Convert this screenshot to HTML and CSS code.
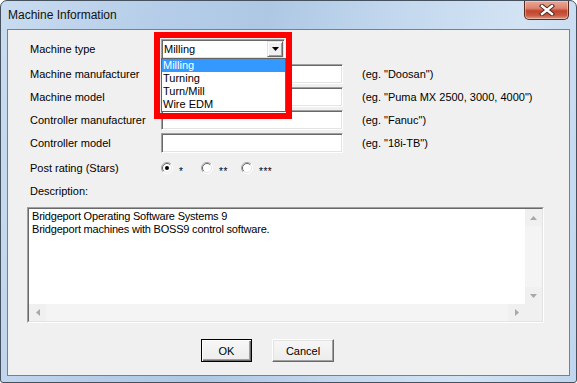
FILE: index.html
```html
<!DOCTYPE html>
<html>
<head>
<meta charset="utf-8">
<title>Machine Information</title>
<link rel="stylesheet" href="styles.css">
</head>
<body>
<div class="window">
  <div class="titlebar">
    <span class="title">Machine Information</span>
    <div class="close">
      <svg width="16" height="12" viewBox="0 0 16 12">
        <path d="M3,2 L13,10 M13,2 L3,10" stroke="#4a2218" stroke-width="4.2" stroke-linecap="square" fill="none"/>
        <path d="M3,2 L13,10 M13,2 L3,10" stroke="#fff" stroke-width="2.4" stroke-linecap="square" fill="none"/>
      </svg>
    </div>
  </div>
  <div class="client">
    <div class="form">
      <div class="row row-first">
        <span class="lbl">Machine type</span>
        <div class="combo">
          <span class="combo-text">Milling</span>
          <span class="combo-btn">
            <svg width="7" height="4" viewBox="0 0 7 4"><polygon points="0,0 7,0 3.5,4" fill="#000"/></svg>
          </span>
        </div>
      </div>
      <div class="row">
        <span class="lbl">Machine manufacturer</span>
        <div class="field"></div>
        <span class="hint">(eg. "Doosan")</span>
      </div>
      <div class="row">
        <span class="lbl">Machine model</span>
        <div class="field"></div>
        <span class="hint">(eg. "Puma MX 2500, 3000, 4000")</span>
      </div>
      <div class="row">
        <span class="lbl">Controller manufacturer</span>
        <div class="field"></div>
        <span class="hint">(eg. "Fanuc")</span>
      </div>
      <div class="row row-gap">
        <span class="lbl">Controller model</span>
        <div class="field"></div>
        <span class="hint">(eg. "18i-TB")</span>
      </div>
      <div class="row">
        <span class="lbl">Post rating (Stars)</span>
        <div class="radios">
          <span class="opt">
            <svg width="12" height="12" viewBox="0 0 12 12">
              <circle cx="6" cy="6" r="5.5" fill="#fff"/>
              <path d="M2.1,9.9 A5.5,5.5 0 0 1 9.9,2.1" fill="none" stroke="#a0a0a0"/>
              <path d="M9.9,2.1 A5.5,5.5 0 0 1 2.1,9.9" fill="none" stroke="#fff"/>
              <path d="M2.8,9.2 A4.5,4.5 0 0 1 9.2,2.8" fill="none" stroke="#696969"/>
              <path d="M9.2,2.8 A4.5,4.5 0 0 1 2.8,9.2" fill="none" stroke="#e3e3e3"/>
              <circle cx="6" cy="6" r="2" fill="#000"/>
            </svg>
            <span class="star">*</span>
          </span>
          <span class="opt">
            <svg width="12" height="12" viewBox="0 0 12 12">
              <circle cx="6" cy="6" r="5.5" fill="#fff"/>
              <path d="M2.1,9.9 A5.5,5.5 0 0 1 9.9,2.1" fill="none" stroke="#a0a0a0"/>
              <path d="M9.9,2.1 A5.5,5.5 0 0 1 2.1,9.9" fill="none" stroke="#fff"/>
              <path d="M2.8,9.2 A4.5,4.5 0 0 1 9.2,2.8" fill="none" stroke="#696969"/>
              <path d="M9.2,2.8 A4.5,4.5 0 0 1 2.8,9.2" fill="none" stroke="#e3e3e3"/>
            </svg>
            <span class="star">**</span>
          </span>
          <span class="opt">
            <svg width="12" height="12" viewBox="0 0 12 12">
              <circle cx="6" cy="6" r="5.5" fill="#fff"/>
              <path d="M2.1,9.9 A5.5,5.5 0 0 1 9.9,2.1" fill="none" stroke="#a0a0a0"/>
              <path d="M9.9,2.1 A5.5,5.5 0 0 1 2.1,9.9" fill="none" stroke="#fff"/>
              <path d="M2.8,9.2 A4.5,4.5 0 0 1 9.2,2.8" fill="none" stroke="#696969"/>
              <path d="M9.2,2.8 A4.5,4.5 0 0 1 2.8,9.2" fill="none" stroke="#e3e3e3"/>
            </svg>
            <span class="star">***</span>
          </span>
        </div>
      </div>
      <div class="row">
        <span class="lbl">Description:</span>
      </div>
    </div>

    <div class="desc">
      <div class="desc-inner">
        <div class="desc-text">Bridgeport Operating Software Systems 9<br>Bridgeport machines with BOSS9 control software.</div>
        <div class="vscroll">
          <span class="sb-btn"><svg width="7" height="4" viewBox="0 0 7 4"><polygon points="3.5,0 7,4 0,4" fill="#a8a8a8"/></svg></span>
          <span class="sb-track"></span>
          <span class="sb-btn"><svg width="7" height="4" viewBox="0 0 7 4"><polygon points="0,0 7,0 3.5,4" fill="#a8a8a8"/></svg></span>
        </div>
        <div class="hscroll">
          <span class="sb-btn"><svg width="4" height="7" viewBox="0 0 4 7"><polygon points="4,0 4,7 0,3.5" fill="#a8a8a8"/></svg></span>
          <span class="sb-track"></span>
          <span class="sb-btn"><svg width="4" height="7" viewBox="0 0 4 7"><polygon points="0,0 4,3.5 0,7" fill="#a8a8a8"/></svg></span>
        </div>
        <div class="corner"></div>
      </div>
    </div>

    <div class="buttons">
      <button class="btn btn-default">OK</button>
      <button class="btn btn-cancel">Cancel</button>
    </div>

    <div class="highlight"></div>
    <ul class="droplist">
      <li class="selected">Milling</li>
      <li>Turning</li>
      <li>Turn/Mill</li>
      <li>Wire EDM</li>
    </ul>
  </div>
</div>
</body>
</html>
```
FILE: styles.css
```css
* {
  box-sizing: border-box;
}

html, body {
  margin: 0;
  padding: 0;
  background: #ffffff;
}

body {
  width: 577px;
  height: 383px;
  overflow: hidden;
  font-family: "Liberation Sans", Arial, sans-serif;
  font-size: 11px;
  color: #000;
}

.window {
  width: 577px;
  height: 383px;
  border: 1px solid #45515e;
  border-radius: 7px 7px 3px 3px;
  background: linear-gradient(100deg, #c9dcf0 0%, #b5cde8 25%, #aec8e4 42%, #c3d8ee 62%, #d3e3f4 82%, #c0d6ee 100%);
  display: flex;
  flex-direction: column;
}

.titlebar {
  height: 28px;
  flex: none;
  display: flex;
  align-items: flex-start;
}

.title {
  font-size: 12px;
  line-height: 14px;
  padding: 7px 0 0 7px;
  color: #111;
}

.close {
  margin-left: auto;
  margin-right: 7px;
  width: 45px;
  height: 19px;
  border: 1px solid #5a2a20;
  border-top: none;
  border-radius: 0 0 5px 5px;
  background: linear-gradient(180deg, #eaa796 0%, #dc8570 40%, #c3432c 55%, #c85a42 80%, #e09a83 100%);
  box-shadow: inset 0 0 0 1px rgba(255, 255, 255, 0.35);
  display: flex;
  align-items: center;
  justify-content: center;
}

.client {
  flex: 1;
  margin: 0 6px 6px;
  border: 1px solid #6f8296;
  background: #f0f0f0;
  position: relative;
}

.form {
  padding: 9px 0 0 22px;
}

.row {
  display: flex;
  align-items: center;
  height: 20px;
  margin-bottom: 3px;
}

.row-first,
.row-gap {
  margin-bottom: 5px;
}

.lbl {
  width: 131px;
  flex: none;
  white-space: nowrap;
}

.field {
  width: 182px;
  height: 20px;
  flex: none;
  background: #fff;
  border: 1px solid;
  border-color: #a0a0a0 #ffffff #ffffff #a0a0a0;
  box-shadow: inset 1px 1px 0 #696969, inset -1px -1px 0 #e3e3e3;
}

.hint {
  margin-left: 19px;
  white-space: nowrap;
}

.combo {
  width: 124px;
  height: 20px;
  flex: none;
  background: #fff;
  border: 1px solid;
  border-color: #a0a0a0 #ffffff #ffffff #a0a0a0;
  box-shadow: inset 1px 1px 0 #696969, inset -1px -1px 0 #e3e3e3;
  padding: 1px;
  display: flex;
  align-items: stretch;
}

.combo-text {
  flex: 1;
  padding-left: 1px;
  line-height: 16px;
}

.combo-btn {
  width: 16px;
  flex: none;
  background: #f0f0f0;
  border: 1px solid;
  border-color: #e3e3e3 #696969 #696969 #e3e3e3;
  box-shadow: inset 1px 1px 0 #fff, inset -1px -1px 0 #a0a0a0;
  display: flex;
  align-items: center;
  justify-content: center;
}

.radios {
  display: flex;
  align-items: center;
  padding-left: 0;
}

.opt {
  width: 40px;
  display: flex;
  align-items: center;
}

.opt svg {
  flex: none;
}

.star {
  margin-left: 6px;
  font-size: 10px;
  line-height: 10px;
  height: 10px;
  padding-top: 4px;
  letter-spacing: 0.5px;
}

.desc {
  margin: 6px 0 0 19px;
  width: 517px;
  height: 116px;
  border: 1px solid;
  border-color: #a0a0a0 #ffffff #ffffff #a0a0a0;
}

.desc-inner {
  width: 100%;
  height: 100%;
  border: 1px solid;
  border-color: #696969 #e3e3e3 #e3e3e3 #696969;
  background: #fff;
  display: grid;
  grid-template-columns: 1fr 17px;
  grid-template-rows: 1fr 17px;
}

.desc-text {
  padding: 1px 0 0 3px;
  line-height: 13px;
  letter-spacing: -0.2px;
}

.vscroll {
  display: flex;
  flex-direction: column;
  background: #f4f4f4;
}

.hscroll {
  display: flex;
  background: #f4f4f4;
}

.sb-btn {
  width: 17px;
  height: 17px;
  flex: none;
  display: flex;
  align-items: center;
  justify-content: center;
  background: #f0f0f0;
}

.sb-track {
  flex: 1;
}

.corner {
  background: #f0f0f0;
}

.buttons {
  display: flex;
  gap: 20px;
  margin-top: 16px;
  padding-left: 193px;
}

.btn {
  height: 23px;
  font-family: "Liberation Sans", Arial, sans-serif;
  font-size: 11px;
  color: #000;
  background: linear-gradient(180deg, #f7f7f7 0%, #ececec 100%);
  border: 1px solid;
  padding: 0;
  margin: 0;
}

.btn-default {
  width: 51px;
  border-color: #000;
  box-shadow: inset 1px 1px 0 #fff, inset -1px -1px 0 #696969, inset -2px -2px 0 #a0a0a0;
}

.btn-cancel {
  width: 62px;
  border-color: #ffffff #696969 #696969 #ffffff;
  box-shadow: inset -1px -1px 0 #a0a0a0, inset 1px 1px 0 #e3e3e3;
}

.highlight {
  position: absolute;
  left: 146px;
  top: 2px;
  width: 138px;
  height: 87px;
  border: 6px solid #ff0000;
}

.droplist {
  position: absolute;
  left: 153px;
  top: 28px;
  width: 125px;
  height: 54px;
  margin: 0;
  padding: 0;
  list-style: none;
  background: #fff;
  border: 1px solid #646464;
}

.droplist li {
  height: 13px;
  line-height: 13px;
  padding-left: 1px;
}

.droplist li.selected {
  background: #3399ff;
  color: #fff;
}
```
